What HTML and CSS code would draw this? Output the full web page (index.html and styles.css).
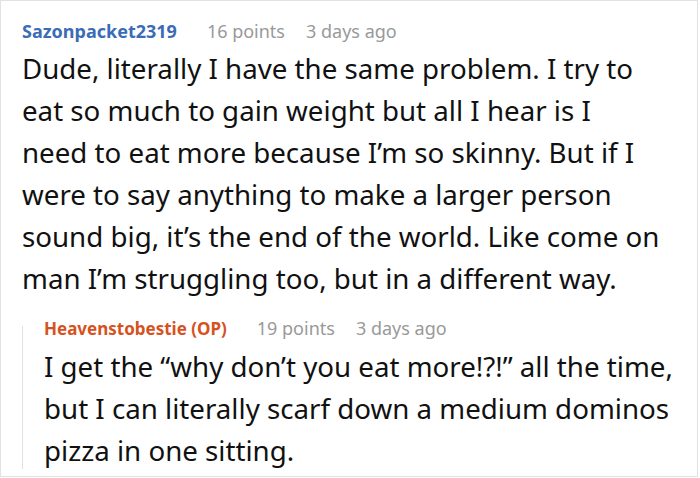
FILE: index.html
```html
<!DOCTYPE html>
<html>
<head>
<meta charset="utf-8">
<link rel="stylesheet" href="styles.css">
</head>
<body>
<div class="card">
  <div class="comment">
    <div class="meta">
      <span class="user user-blue">Sazonpacket2319</span>
      <span class="points">16 points</span>
      <span class="time">3 days ago</span>
    </div>
    <p class="text">Dude, literally I have the same problem. I try to<br>eat so much to gain weight but all I hear is I<br>need to eat more because I’m so skinny. But if I<br>were to say anything to make a larger person<br>sound big, it’s the end of the world. Like come on<br>man I’m struggling too, but in a different way.</p>
    <div class="reply">
      <div class="meta">
        <span class="user user-orange">Heavenstobestie (OP)</span>
        <span class="points">19 points</span>
        <span class="time">3 days ago</span>
      </div>
      <p class="text">I get the “why don’t you eat more!?!” all the time,<br>but I can literally scarf down a medium dominos<br>pizza in one sitting.</p>
    </div>
  </div>
</div>
</body>
</html>
```
FILE: styles.css
```css
html, body {
  margin: 0;
  padding: 0;
  background: #fff;
}
.card {
  box-sizing: border-box;
  width: 698px;
  height: 477px;
  border: 1px solid #e2e2e2;
  font-family: "Noto Sans", "Open Sans", sans-serif;
  color: #111;
  overflow: hidden;
}
.comment {
  padding: 18px 4px 0 21px;
}
.meta {
  display: flex;
  align-items: baseline;
  font-size: 18px;
  line-height: 24px;
  white-space: nowrap;
}
.user {
  font-weight: 700;
}
.user-blue { color: #3b6cb6; }
.user-orange {
  color: #d5521f;
  font-size: 17px;
}
.points {
  color: #999;
  margin-left: 30px;
}
.time {
  color: #999;
  margin-left: 21px;
}
.text {
  margin: 4px 0 0;
  font-size: 27.7px;
  line-height: 42px;
  white-space: nowrap;
}
.reply {
  position: relative;
  margin-top: 17px;
  padding-left: 22px;
}
.reply::before {
  content: "";
  position: absolute;
  left: 0;
  top: 10px;
  bottom: 2px;
  width: 1px;
  background: #e0e0e0;
}
```
